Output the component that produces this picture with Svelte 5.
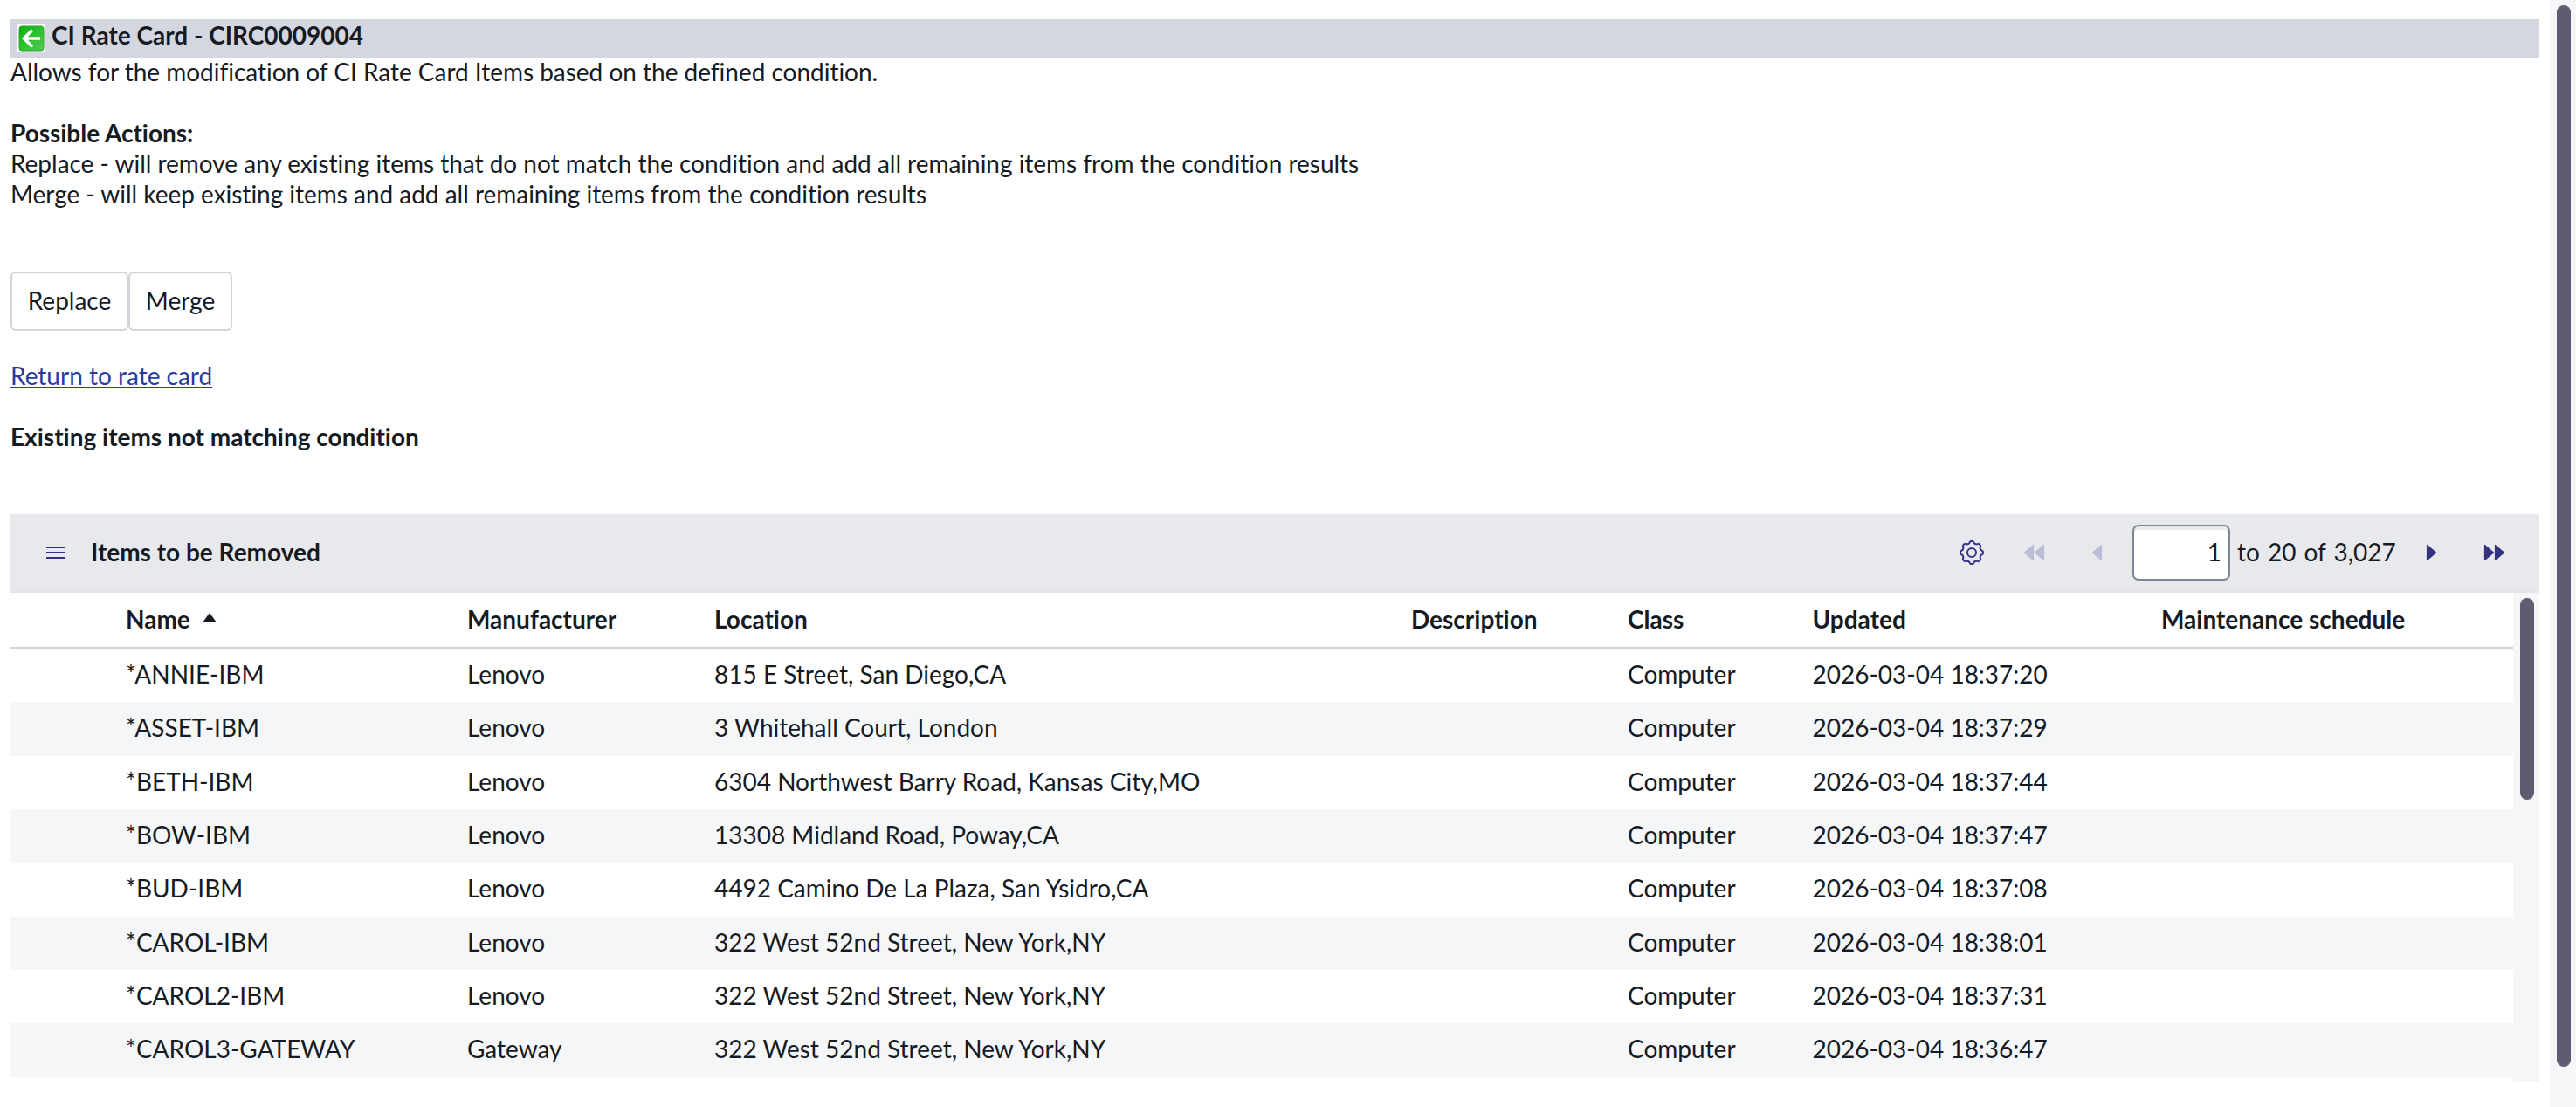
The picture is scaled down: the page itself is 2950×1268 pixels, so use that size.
<script>
  const columns = ['Name', 'Manufacturer', 'Location', 'Description', 'Class', 'Updated', 'Maintenance schedule'];
  const rows = [
    ['*ANNIE-IBM', 'Lenovo', '815 E Street, San Diego,CA', '2026-03-04 18:37:20'],
    ['*ASSET-IBM', 'Lenovo', '3 Whitehall Court, London', '2026-03-04 18:37:29'],
    ['*BETH-IBM', 'Lenovo', '6304 Northwest Barry Road, Kansas City,MO', '2026-03-04 18:37:44'],
    ['*BOW-IBM', 'Lenovo', '13308 Midland Road, Poway,CA', '2026-03-04 18:37:47'],
    ['*BUD-IBM', 'Lenovo', '4492 Camino De La Plaza, San Ysidro,CA', '2026-03-04 18:37:08'],
    ['*CAROL-IBM', 'Lenovo', '322 West 52nd Street, New York,NY', '2026-03-04 18:38:01'],
    ['*CAROL2-IBM', 'Lenovo', '322 West 52nd Street, New York,NY', '2026-03-04 18:37:31'],
    ['*CAROL3-GATEWAY', 'Gateway', '322 West 52nd Street, New York,NY', '2026-03-04 18:36:47'],
  ];

  // Scalloped outline with eight lobes for the settings gear
  const gear = Array.from({ length: 97 }, (_, i) => {
    const a = (i / 96) * Math.PI * 2;
    const r = 11.9 + 1.1 * Math.tanh(2.2 * Math.cos(8 * a));
    return `${(15 + r * Math.sin(a)).toFixed(2)},${(15 - r * Math.cos(a)).toFixed(2)}`;
  }).join(' ');
</script>

<div class="page">
  <main>
    <header class="title">
      <svg class="back" viewBox="0 0 32 32">
        <defs>
          <linearGradient id="green" x1="0" y1="0" x2="1" y2="1">
            <stop offset="0" stop-color="#0fae12" />
            <stop offset="0.5" stop-color="#2cc32c" />
            <stop offset="1" stop-color="#5cc45c" />
          </linearGradient>
        </defs>
        <rect width="32" height="32" fill="#fff" />
        <rect x="2" y="2" width="28" height="28" rx="3" fill="url(#green)" stroke="#27a52c" />
        <path d="M26 16H8M17 6.500L7.500 16l9.500 9.500" fill="none" stroke="#fff" stroke-width="3.600" />
      </svg>
      <b>CI Rate Card - CIRC0009004</b>
    </header>
    <div class="intro">
      <p>Allows for the modification of CI Rate Card Items based on the defined condition.</p>
      <p class="gap"><b>Possible Actions:</b></p>
      <p>Replace - will remove any existing items that do not match the condition and add all remaining items from the condition results</p>
      <p>Merge - will keep existing items and add all remaining items from the condition results</p>
    </div>
    <div class="buttons"><button class="replace">Replace</button><button>Merge</button></div>
    <p class="link"><a href="#top">Return to rate card</a></p>
    <p class="gap"><b>Existing items not matching condition</b></p>

    <section>
      <div class="bar">
        <svg class="menu" viewBox="0 0 22 14"><path d="M0 1h22M0 7h22M0 13h22" stroke="#32327f" stroke-width="2" /></svg>
        <b>Items to be Removed</b>
        <div class="pager">
          <svg class="gear" viewBox="0 0 30 30" fill="none" stroke="#34348a" stroke-width="2">
            <polygon points={gear} /><circle cx="15" cy="15" r="5" />
          </svg>
          <svg class="arrow first off" viewBox="0 0 24 18"><path d="M10.500 .5v17L.5 9zM22.500 .5v17L12.500 9z" /></svg>
          <svg class="arrow prev off" viewBox="0 0 12 18"><path d="M10.500 .5v17L.5 9z" /></svg>
          <input value="1" />
          <span class="range">to 20 of 3,027</span>
          <svg class="arrow next" viewBox="0 0 12 18"><path d="M.5 .5v17L10.500 9z" /></svg>
          <svg class="arrow last" viewBox="0 0 24 18"><path d="M.5 .5v17L10.500 9zM12.500 .5v17L22.500 9z" /></svg>
        </div>
      </div>
      <div class="list">
        <div class="table">
          <div class="row head">
            <i></i>
            {#each columns as c, n}
              <span>{c}{#if n === 0}<svg class="sort" viewBox="0 0 16 11"><path d="M8 0l8 11H0z" /></svg>{/if}</span>
            {/each}
          </div>
          {#each rows as [name, maker, place, updated]}
            <div class="row">
              <i></i><span>{name}</span><span>{maker}</span><span>{place}</span><span></span><span>Computer</span><span>{updated}</span><span></span>
            </div>
          {/each}
        </div>
        <div class="track"><div class="thumb"></div></div>
      </div>
    </section>
  </main>
  <div class="track outer"><div class="thumb"></div></div>
</div>

<style>
  :global(body) { background: #fff; overflow: hidden; }
  .page {
    display: flex; justify-content: space-between; height: 1268px;
    font: 28px/35px Lato, sans-serif; color: #151a23;
    font-variant-ligatures: none;
  }
  main { width: 2896px; padding: 22px 0 0 12px; }
  p { margin: 0; }
  .gap { margin-top: 35px; }
  .title { height: 44px; background: #d4d7df; display: flex; box-sizing: border-box; padding: 0 8px; gap: 7px; }
  .title b { margin-top: 1px; }
  .intro { margin-top: -1px; letter-spacing: -0.022px; }
  .back { width: 32px; height: 32px; margin-top: 6px; }
  .buttons { display: flex; margin-top: 71px; }
  button {
    width: 119px; height: 68px; padding: 0 0 2px; border: 2px solid #d0d4db; border-radius: 6px;
    background: #fff; color: inherit; font: inherit; box-sizing: border-box;
  }
  button.replace { width: 135px; }
  .link { margin-top: 34px; }
  a { color: #2a3c9c; text-underline-offset: 2px; text-decoration-thickness: 2px; }
  section { margin-top: 71px; }
  .bar {
    height: 90px; box-sizing: border-box; background: #e8e9ed; border-bottom: 2px solid #e3e4e9;
    display: flex; align-items: center; padding: 0 39px 0 41px;
  }
  .bar b, .range { margin-top: -2px; }
  .menu { width: 22px; height: 14px; margin-right: 29px; }
  .pager { margin-left: auto; display: flex; align-items: center; }
  .arrow { color: #32327f; fill: currentColor; stroke: currentColor; stroke-width: 1.2; stroke-linejoin: round; overflow: visible; }
  .arrow.off { color: #bbbcd6; }
  .gear { width: 30px; height: 30px; margin-right: 45px; }
  .first, .last { width: 24px; height: 18px; }
  .prev, .next { width: 12px; height: 18px; }
  .first { margin-right: 54px; }
  .prev { margin-right: 34px; }
  .next { margin-right: 54px; }
  input {
    width: 112px; height: 64px; box-sizing: border-box; border: 2px solid #7f8592; border-radius: 7px;
    padding: 0 8px 2px; text-align: right; font: inherit; color: inherit; background: #fff;
    box-shadow: inset 0 4px 1px #e8e9ea; margin: 0 8px 0 0;
  }
  .range { width: 217px; white-space: nowrap; word-spacing: 1.900px; }
  .list { display: flex; height: 560px; }
  .table { flex: 1; }
  .row {
    display: grid; grid-template-columns: 132px 391px 283px 798px 248px 211.500px 399.500px 1fr;
    height: 61.333px; box-sizing: border-box; align-items: center; padding-bottom: 2px;
  }
  .row:nth-child(odd) { background: #f5f6f8; }
  .row.head { height: 64px; padding-bottom: 1px; background: #fff; border-bottom: 2px solid #d0d4db; font-weight: 700; }
  .sort { width: 16px; height: 11px; margin-left: 14px; vertical-align: 7px; fill: #151a23; }
  .track { width: 30px; background: #f5f6f8; box-sizing: border-box; padding: 6px 6px 0 8px; }
  .thumb { height: 231px; border-radius: 8px; background: #5e5c71; }
  .outer .thumb { height: 1216px; }
</style>
